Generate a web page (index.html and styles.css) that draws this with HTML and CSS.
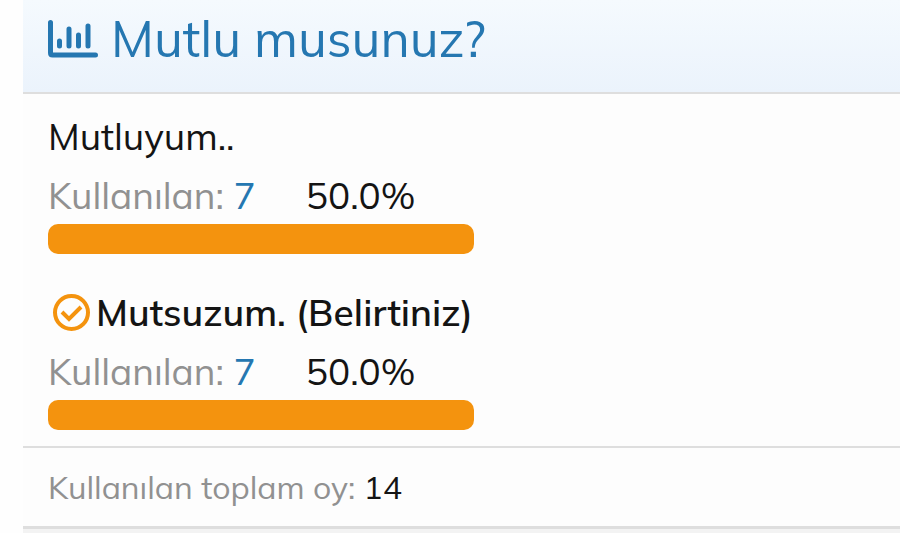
FILE: index.html
```html
<!DOCTYPE html>
<html lang="tr">
	<head>
		<meta charset="utf-8">
		<title>Mutlu musunuz?</title>
		<link rel="stylesheet" href="styles.css">
	</head>
	<body>
		<div class="poll">
			<h2 class="poll_title">
				<svg class="icon_chart" viewBox="0 0 50 38" aria-hidden="true">
					<path d="M2.500 2.500V33Q2.500 35 4.500 35H47.500" />
					<path d="M11.500 21V26M21 9V26M30.500 15V26M40 6V26" />
				</svg>
				<span>Mutlu musunuz?</span>
			</h2>
			<ul class="poll_body">
				<li class="option">
					<h3>Mutluyum..</h3>
					<p class="votes"><span class="label">Kullanılan: <a href="#">7</a></span><span>50.0%</span></p>
					<div class="bar"></div>
				</li>
				<li class="option">
					<h3 class="voted">
						<svg class="icon_check" viewBox="0 0 38 38" aria-hidden="true">
							<circle cx="18.500" cy="18.500" r="16.500" />
							<path d="M9 18L16 25L28 13" />
						</svg>
						<span>Mutsuzum. (Belirtiniz)</span>
					</h3>
					<p class="votes"><span class="label">Kullanılan: <a href="#">7</a></span><span>50.0%</span></p>
					<div class="bar"></div>
				</li>
			</ul>
			<p class="poll_footer">Kullanılan toplam oy: <span class="total">14</span></p>
		</div>
	</body>
</html>
```
FILE: styles.css
```css
body {
	margin: 0;
	background: #fefefe;
	color: #141414;
	font-family: Mulish, Muli, Lato, sans-serif;
	font-size: 37px;
	line-height: 59px;
	overflow: hidden;
}
h2, h3, p, ul {
	margin: 0;
	padding: 0;
	font-size: inherit;
	font-weight: 400;
}
a {
	color: #2577b1;
	text-decoration: none;
}
.poll {
	min-height: 100vh;
	margin-left: 23px;
	background: #f3f3f3;
}
.poll_title {
	display: flex;
	align-items: center;
	gap: 13px;
	padding: 9px 25px 23px;
	border-bottom: 2px solid #dedede;
	background: linear-gradient(#f5fafe, #ebf3fc);
	color: #2577b1;
	font-size: 50px;
	line-height: 60px;
}
.icon_chart {
	width: 50px;
	height: 38px;
	fill: none;
	stroke: currentColor;
	stroke-width: 5;
	stroke-linecap: round;
}
.poll_body {
	display: grid;
	gap: 29px;
	padding: 13px 0 16px 25px;
	background: #fdfdfd;
	list-style: none;
}
.voted {
	display: flex;
	align-items: center;
	gap: 5px;
	padding-left: 5px;
	font-weight: 600;
}
.icon_check {
	width: 38px;
	height: 38px;
	fill: none;
	stroke: #f4930e;
	stroke-width: 4;
}
.votes {
	display: flex;
	gap: 50px;
	line-height: 58px;
}
.label, .poll_footer {
	color: #919191;
}
.bar {
	width: 50%;
	height: 30px;
	border-radius: 10px;
	background: #f4930e;
}
.poll_footer {
	padding: 0 25px;
	border-top: 2px solid #dedede;
	border-bottom: 3px solid #dedede;
	background: #fdfdfd;
	font-size: 32px;
	line-height: 78px;
}
.total {
	color: #141414;
}
```
